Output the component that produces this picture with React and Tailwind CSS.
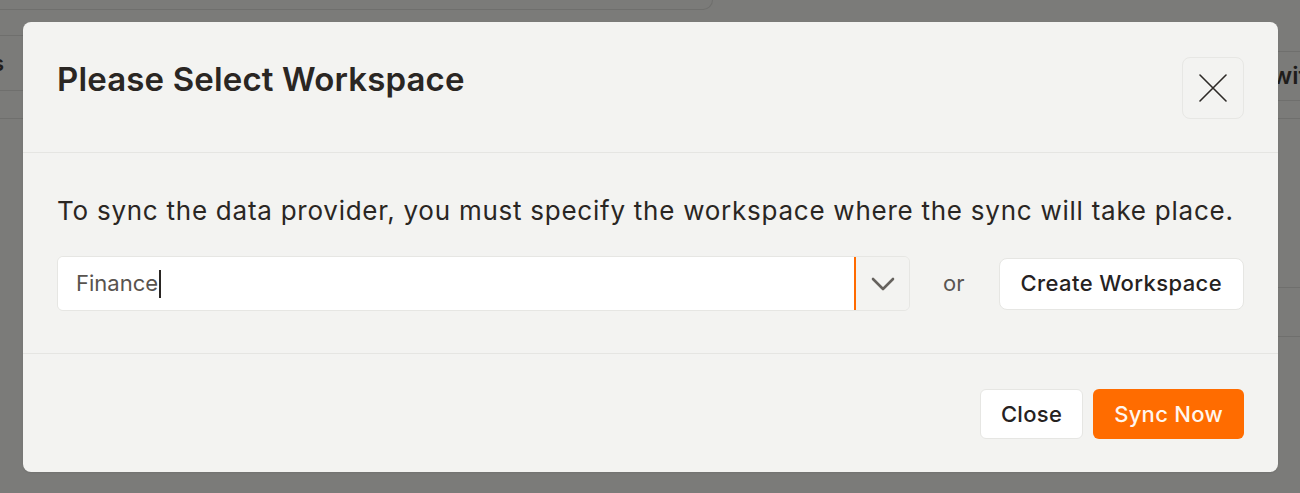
import React from "react";

function XIcon() {
  return (
    <svg width="28" height="28" viewBox="0 0 28 28" fill="none" stroke="#2d2a27" strokeWidth="1.6" strokeLinecap="round">
      <path d="M1 1 L27 27 M27 1 L1 27" />
    </svg>
  );
}

function Chevron() {
  return (
    <svg width="24" height="16" viewBox="0 0 24 16" fill="none" stroke="#66625e" strokeWidth="2.6" strokeLinecap="round" strokeLinejoin="round">
      <path d="M2 3 L12 13 L22 3" />
    </svg>
  );
}

export default function App() {
  return (
    <div className="relative h-[493px] w-[1300px] overflow-hidden bg-[#7b7b79] font-['Inter',sans-serif]">
      {/* dimmed background page */}
      <div className="flex h-full flex-col">
        <div className="h-[10px] w-[713px] rounded-br-xl border-b border-r border-[#6f6f6d]" />
        <div className="flex flex-1 justify-between">
          <div className="flex w-[40px] flex-col">
            <div className="mt-[25px] flex h-[56px] items-center rounded-r-md border-y border-[#6f6f6d]">
              <span className="-ml-[8px] text-[22px] font-semibold text-[#1f1d1b]">s</span>
            </div>
            <div className="mt-[27px] border-t border-[#6f6f6d]" />
          </div>
          <div className="flex w-[40px] flex-col">
            <div className="mt-[41px] flex h-[50px] items-center border-y border-[#6f6f6d]">
              <span className="ml-[12px] whitespace-nowrap text-[24px] font-semibold text-[#1f1d1b]">wit</span>
            </div>
            <div className="mt-[17px] border-t border-[#6f6f6d]" />
            <div className="mt-[168px] h-[50px] border-y border-[#6f6f6d]" />
          </div>
        </div>
      </div>

      {/* modal */}
      <div className="absolute left-[23px] top-[22px] flex h-[450px] w-[1255px] flex-col rounded-lg bg-[#f3f3f1] shadow-[0_1px_2px_rgba(0,0,0,0.08)]">
        <div className="flex h-[131px] items-start justify-between border-b border-[#e5e5e2] pl-[34px] pr-[34px]">
          <h1 className="mt-[37px] text-[33px] font-semibold leading-[40px] tracking-[0.15px] text-[#2a2623]">
            Please Select Workspace
          </h1>
          <button className="mt-[35px] flex h-[62px] w-[62px] items-center justify-center rounded-lg border border-[#e7e7e4]">
            <XIcon />
          </button>
        </div>

        <div className="flex h-[201px] flex-col border-b border-[#e5e5e2] px-[34px]">
          <p className="mt-[42px] whitespace-nowrap text-[26px] leading-[32px] tracking-[0.75px] text-[#2a2623]">
            To sync the data provider, you must specify the workspace where the sync will take place.
          </p>
          <div className="mt-[29px] flex items-center">
            <div className="flex h-[55px] w-[853px] overflow-hidden rounded-md border border-[#e6e6e3]">
              <div className="flex w-[796px] items-center bg-white pl-[18px]">
                <span className="text-[22px] text-[#58534e]">Finance</span>
                <span className="ml-[1px] h-[28px] w-[1.5px] bg-[#2a2623]" />
              </div>
              <div className="w-[2px] bg-[#ff6a00]" />
              <div className="flex flex-1 items-center justify-center bg-[#f3f3f1]">
                <Chevron />
              </div>
            </div>
            <span className="ml-[33px] text-[22px] text-[#5a5651]">or</span>
            <button className="ml-auto h-[52px] rounded-lg border border-[#e6e6e3] bg-white px-[21px] text-[22px] font-medium tracking-[0.4px] text-[#26221f]">
              Create Workspace
            </button>
          </div>
        </div>

        <div className="flex flex-1 items-start justify-end gap-[10px] px-[34px] pt-[35px]">
          <button className="h-[50px] rounded-md border border-[#e6e6e3] bg-white px-[20px] text-[22px] font-medium tracking-[0.3px] text-[#26221f]">
            Close
          </button>
          <button className="h-[50px] rounded-md bg-[#ff6c00] px-[21px] text-[22px] font-medium tracking-[0.3px] text-[#fff6ee]">
            Sync Now
          </button>
        </div>
      </div>
    </div>
  );
}
